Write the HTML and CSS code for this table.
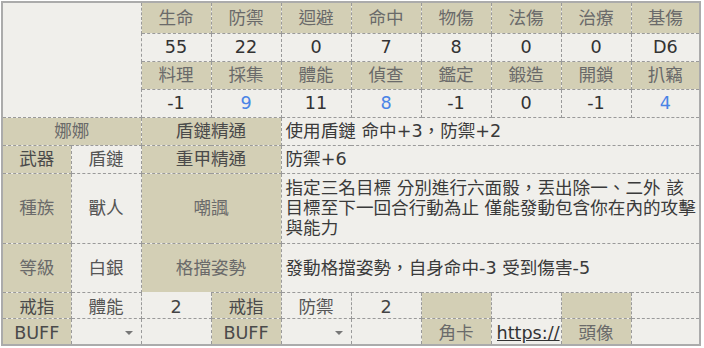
FILE: index.html
```html
<!DOCTYPE html>
<html lang="zh-Hant">
<head>
<meta charset="utf-8">
<title>角色卡</title>
<link rel="stylesheet" href="styles.css">
</head>
<body>
<div class="sheet">
<table class="grid">
<colgroup>
<col class="c-edge"><col class="c"><col class="c"><col class="c"><col class="c"><col class="c"><col class="c"><col class="c"><col class="c"><col class="c-edge">
</colgroup>
<tr class="r1">
  <td class="blank" rowspan="4" colspan="2"></td>
  <td class="lab">生命</td><td class="lab">防禦</td><td class="lab">迴避</td><td class="lab">命中</td><td class="lab">物傷</td><td class="lab">法傷</td><td class="lab">治療</td><td class="lab">基傷</td>
</tr>
<tr class="r">
  <td class="val">55</td><td class="val">22</td><td class="val">0</td><td class="val">7</td><td class="val">8</td><td class="val">0</td><td class="val">0</td><td class="val">D6</td>
</tr>
<tr class="r">
  <td class="lab">料理</td><td class="lab">採集</td><td class="lab">體能</td><td class="lab">偵查</td><td class="lab">鑑定</td><td class="lab">鍛造</td><td class="lab">開鎖</td><td class="lab">扒竊</td>
</tr>
<tr class="r">
  <td class="val">-1</td><td class="val blue">9</td><td class="val">11</td><td class="val blue">8</td><td class="val">-1</td><td class="val">0</td><td class="val">-1</td><td class="val blue">4</td>
</tr>
<tr class="r">
  <td class="lab" colspan="2">娜娜</td>
  <td class="lab dark" colspan="2">盾鏈精通</td>
  <td class="desc" colspan="6">使用盾鏈 命中+3，防禦+2</td>
</tr>
<tr class="r">
  <td class="lab dark">武器</td><td class="txt">盾鏈</td>
  <td class="lab dark" colspan="2">重甲精通</td>
  <td class="desc" colspan="6">防禦+6</td>
</tr>
<tr class="r7">
  <td class="lab">種族</td><td class="txt">獸人</td>
  <td class="lab" colspan="2">嘲諷</td>
  <td class="desc" colspan="6">指定三名目標 分別進行六面骰，丟出除一、二外 該目標至下一回合行動為止 僅能發動包含你在內的攻擊與能力</td>
</tr>
<tr class="r8">
  <td class="lab">等級</td><td class="txt">白銀</td>
  <td class="lab" colspan="2">格擋姿勢</td>
  <td class="desc" colspan="6">發動格擋姿勢，自身命中-3 受到傷害-5</td>
</tr>
<tr class="r9">
  <td class="lab dark">戒指</td><td class="txt dark">體能</td><td class="txt num nt">2</td>
  <td class="lab dark">戒指</td><td class="txt dark">防禦</td><td class="txt num">2</td>
  <td class="lab"></td><td class="txt"></td><td class="lab"></td><td class="txt"></td>
</tr>
<tr class="r9">
  <td class="lab dark buff">BUFF</td><td class="sel"><span class="arrow"></span></td><td class="txt"></td>
  <td class="lab dark buff">BUFF</td><td class="sel"><span class="arrow"></span></td><td class="txt"></td>
  <td class="lab">角卡</td><td class="link"><div class="clip"><a class="url" href="#">https://</a></div></td><td class="lab">頭像</td><td class="txt"></td>
</tr>
</table>
</div>
</body>
</html>
```
FILE: styles.css
```css
html, body {
  margin: 0;
  background: #ffffff;
}

body {
  font-family: "DejaVu Sans", "Noto Sans CJK TC", sans-serif;
  font-size: 17.6px;
}

.sheet {
  margin: 1px 0 0 1px;
  width: 696px;
  border: 2px solid #ababab;
  background: #f0efeb;
}

.grid {
  width: 696px;
  table-layout: fixed;
  border-collapse: collapse;
  border-style: hidden;
}

.c-edge { width: 68px; }
.c { width: 70px; }

.grid td {
  border: 1px dashed #9a9a9a;
  padding: 0 4px;
  text-align: center;
  vertical-align: middle;
  line-height: 20px;
  color: #333333;
  white-space: nowrap;
  overflow: hidden;
}

.r1 { height: 30px; }
.r { height: 28px; }
.r7 { height: 70px; }
.r8 { height: 49px; }
.r9 { height: 26px; }

.grid .r9 td {
  padding-top: 4px;
  padding-bottom: 0;
}

.grid td.lab {
  background: #d3cfb5;
  color: #6a6a6a;
}

.grid td.dark { color: #4a4a4a; }
.grid td.txt { color: #555555; }
.grid td.val { color: #333333; }
.grid td.blue { color: #4a84e6; }
.grid td.num { color: #444444; }
.grid td.nt { border-top-style: hidden; }

.grid td.desc {
  text-align: left;
  white-space: normal;
  color: #3a3a3a;
  padding: 0 0 0 4px;
}

.grid td.sel {
  position: relative;
}

.arrow {
  position: absolute;
  right: 8px;
  top: 12px;
  width: 0;
  height: 0;
  border-left: 4px solid transparent;
  border-right: 4px solid transparent;
  border-top: 4px solid #777777;
}

.grid td.link {
  text-align: left;
  padding-left: 5px;
  padding-right: 0;
}

.clip {
  width: 64px;
  overflow: hidden;
  white-space: nowrap;
}

.url {
  color: #333333;
  text-decoration: underline;
}
```
